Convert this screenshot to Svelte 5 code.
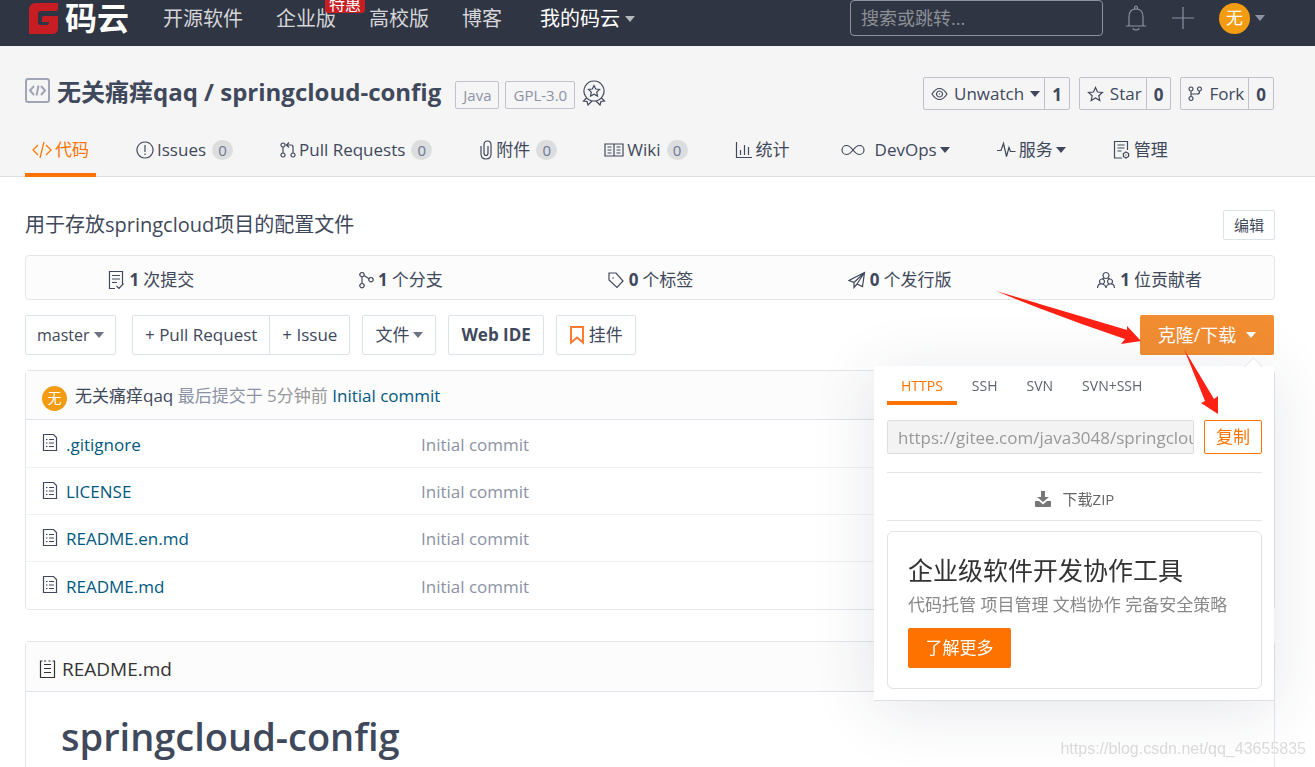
<script>
    const icons = {
        repo: { w: 25, h: 25, d: "M3 1h19q2 0 2 2v19q0 2-2 2H3q-2 0-2-2V3q0-2 2-2zM9 8l-4 4.500 4 4.500M16 8l4 4.500-4 4.500M13.500 7.500l-2 10" },
        code: { w: 20, h: 18, d: "M6 4L1 9l5 5M14 4l5 5-5 5M12 1L8 17" },
        issue: { w: 18, h: 18, d: "M9 1a8 8 0 1 0 .01 0zM9 4v7M9 12.500v1.500" },
        pull: { w: 16, h: 18, d: "M3 2a2 2 0 1 0 .01 0zM3 12a2 2 0 1 0 .01 0zM13 12a2 2 0 1 0 .01 0zM3 6v6M13 12V6q0-2-2-2H7M9 1.500L6.500 4 9 6.500" },
        clip: { w: 14, h: 20, d: "M2 6v8q0 5 5 5t5-5V5q0-4-3.500-4T5 5v8q0 2.500 2 2.500T9 13V6" },
        book: { w: 20, h: 16, d: "M1 2h18v12H1zM10 2v12M3.500 5h4M3.500 8h4M3.500 11h4M12.500 5h4M12.500 8h4M12.500 11h4" },
        chart: { w: 18, h: 18, d: "M1.500 1v15.500H17M5.500 14V9M9.500 14V4M13.500 14V6" },
        loop: { w: 35, h: 12, d: "M16 6C13 2 11.500 1.500 9.500 1.500a4.500 4.500 0 0 0 0 9C11.500 10.500 13 10 16 6c3-4 4.500-4.500 6.500-4.500a4.500 4.500 0 0 1 0 9C20.500 10.500 19 10 16 6z" },
        pulse: { w: 19, h: 18, d: "M0 9.500h4l2.500-7 3 13 2.500-9 1.500 4h5" },
        manage: { w: 18, h: 20, d: "M9 18H1.500V1.500h13V10M4.500 5h7M4.500 8h7M4.500 11h4M13 12l2.600 1.500v3L13 18l-2.600-1.500v-3zM13 14.500v1" },
        eye: { w: 17, h: 14, d: "M1 7q3.500-5.500 7.500-5.500T16 7q-3.500 5.500-7.500 5.500T1 7zM8.500 4a3 3 0 1 0 .01 0zM8.500 6.500v1" },
        star: { w: 17, h: 16, d: "M8.500 1.500l2 4.500 5 .5-3.700 3.300 1 4.700-4.300-2.500-4.300 2.500 1-4.700L1.500 6.500l5-.5z" },
        fork: { w: 15, h: 16, d: "M3 1a2 2 0 1 0 .01 0zM11.500 1a2 2 0 1 0 .01 0zM3 10.500a2 2 0 1 0 .01 0zM3 5v5.500M11.500 5v1q0 2-2.500 2H3" },
        medal: { w: 24, h: 26, d: "M12 1a10 10 0 1 0 .01 0zM12 5.500l1.700 3.500 3.800.5-2.800 2.600.8 3.900-3.500-1.900L8.500 16l.8-3.900-2.800-2.600 3.800-.5zM4.500 18L1.500 21l3.500.5 1 3.500 4-4M19.500 18l3 3-3.500.5-1 3.500-4-4" },
        commit: { w: 18, h: 20, d: "M8 18.500H2.500V1.500h13V14M5 5.500h8M5 9h8M5 12.500h5M9.500 16l2.500 2.500 4.500-5" },
        branch: { w: 16, h: 18, d: "M4 1.500a2.200 2.200 0 1 0 .01 0zM4 12.500a2.200 2.200 0 1 0 .01 0zM13 6.500a2.200 2.200 0 1 0 .01 0zM4 6v6.500M6 4.500l5 3.200" },
        tag: { w: 18, h: 18, d: "M2 2h7l7 8-6 6.500L2 9zM6 6.200v1.500" },
        plane: { w: 18, h: 18, d: "M16.500 1.500L1 9.500l5 2v5l3-3.500 5.500 2.500zM16.500 1.500L6 11.500M16.500 1.500L9 13" },
        people: { w: 20, h: 18, d: "M10 1.500a3 3 0 1 0 .01 0zM6 8a2.500 2.500 0 1 0 .01 0zM14 8a2.500 2.500 0 1 0 .01 0zM8 7l-2 1M12 7l2 1M1.500 17q.5-5 4.500-4t4 4q0-3 4-4t4.500 4" },
        doc: { w: 16, h: 19, d: "M1.500 1.500h10l3 3v13h-13zM4 6.500h1.500M7 6.500h5M4 10h1.500M7 10h5M4 13.500h1.500M7 13.500h5" },
        readme: { w: 17, h: 20, d: "M3.500 2H1.500v16.500h14V2h-2M5 2h2M9.500 2h2M5 5.500h7M5 9.500h7M5 13.500h7" },
        mark: { w: 16, h: 20, d: "M2 2h12v15.500l-6-5-6 5z" },
        bell: { w: 22, h: 27, d: "M1 21h20M4 21v-9q0-8 7-8t7 8v9M9.500 4q0-3 1.500-3t1.500 3M7.500 23.500q3.500 3 7 0" },
        plus: { w: 22, h: 22, d: "M11 0v22M0 11h22" },
    };

    const navLinks = ["开源软件", "企业版", "高校版", "博客"];

    const tabs = [
        { icon: "code", label: "代码", active: true },
        { icon: "issue", label: "Issues", count: 0 },
        { icon: "pull", label: "Pull Requests", count: 0 },
        { icon: "clip", label: "附件", count: 0 },
        { icon: "book", label: "Wiki", count: 0 },
        { icon: "chart", label: "统计" },
        { icon: "loop", label: "DevOps", menu: true },
        { icon: "pulse", label: "服务", menu: true },
        { icon: "manage", label: "管理" },
    ];

    const actions = [
        { icon: "eye", label: "Unwatch", count: 1, menu: true },
        { icon: "star", label: "Star", count: 0 },
        { icon: "fork", label: "Fork", count: 0 },
    ];

    const stats = [
        { icon: "commit", count: 1, label: "次提交" },
        { icon: "branch", count: 1, label: "个分支" },
        { icon: "tag", count: 0, label: "个标签" },
        { icon: "plane", count: 0, label: "个发行版" },
        { icon: "people", count: 1, label: "位贡献者" },
    ];

    const files = [".gitignore", "LICENSE", "README.en.md", "README.md"];
    const protocols = ["HTTPS", "SSH", "SVN", "SVN+SSH"];

    let protocol = $state("HTTPS");
    let cloneOpen = $state(true);
    let cloneUrl = $state("https://gitee.com/java3048/springcloud-config.git");

    function copyUrl() {
        navigator.clipboard?.writeText(cloneUrl);
    }
</script>

{#snippet icon(name)}
    <svg class="icon" width={icons[name].w} height={icons[name].h} viewBox="0 0 {icons[name].w} {icons[name].h}" aria-hidden="true">
        <path d={icons[name].d} />
    </svg>
{/snippet}

{#snippet caret()}
    <svg class="caret" width="10" height="6" viewBox="0 0 10 6" aria-hidden="true"><path d="M0 0h10L5 6z" /></svg>
{/snippet}

<div class="page">
    <nav class="navbar">
        <a class="logo" href="#home">
            <svg width="31" height="32" viewBox="0 0 31 32" aria-hidden="true">
                <path fill="#c71d23" d="M8 1h22v6q0 2-2 2H13q-3 0-3 3v9q0 2 2 2h7q2 0 2-2v-1h-7v-4q0-2 2-2h14v12q0 6-6 6H1V8q0-7 7-7z" />
            </svg>
            <span>码云</span>
        </a>
        <div class="nav-links">
            {#each navLinks as link}
                <a href="#nav">{link}{#if link === "企业版"}<span class="promo">特惠</span>{/if}</a>
            {/each}
            <a class="mine" href="#mine">我的码云{@render caret()}</a>
        </div>
        <input class="search" type="text" placeholder="搜索或跳转..." aria-label="搜索或跳转" />
        <div class="nav-tools">
            <button aria-label="通知">{@render icon("bell")}</button>
            <button aria-label="新建">{@render icon("plus")}</button>
            <button class="user"><span class="avatar">无</span>{@render caret()}</button>
        </div>
    </nav>

    <header class="repo-header">
        <div class="title-row">
            <span class="repo-icon">{@render icon("repo")}</span>
            <h1>无关痛痒qaq / springcloud-config</h1>
            <a class="label" href="#java">Java</a>
            <a class="label" href="#license">GPL-3.0</a>
            <span class="medal">{@render icon("medal")}</span>
            <div class="actions">
                {#each actions as action}
                    <div class="action">
                        <button>{@render icon(action.icon)}<span>{action.label}</span>{#if action.menu}{@render caret()}{/if}</button>
                        <a href="#count">{action.count}</a>
                    </div>
                {/each}
            </div>
        </div>
        <div class="tabs">
            {#each tabs as tab}
                <a class="tab" class:active={tab.active} href="#tab">
                    {@render icon(tab.icon)}
                    <span>{tab.label}</span>
                    {#if tab.count !== undefined}<span class="badge">{tab.count}</span>{/if}
                    {#if tab.menu}{@render caret()}{/if}
                </a>
            {/each}
        </div>
    </header>

    <main>
        <div class="description">
            <p>用于存放springcloud项目的配置文件</p>
            <button class="btn small">编辑</button>
        </div>

        <div class="stats">
            {#each stats as stat}
                <a href="#stat">{@render icon(stat.icon)}<b>{stat.count}</b><span>{stat.label}</span></a>
            {/each}
        </div>

        <div class="toolbar">
            <label class="btn branch">
                <select aria-label="分支">
                    <option>master</option>
                </select>
                {@render caret()}
            </label>
            <div class="group">
                <button>+ Pull Request</button>
                <button>+ Issue</button>
            </div>
            <button class="btn">文件{@render caret()}</button>
            <button class="btn strong">Web IDE</button>
            <button class="btn widget">{@render icon("mark")}挂件</button>

            <div class="clone">
                <button class="clone-btn" onclick={() => (cloneOpen = !cloneOpen)}>克隆/下载{@render caret()}</button>
                {#if cloneOpen}
                    <div class="popup">
                        <div class="protocols">
                            {#each protocols as name}
                                <button class:active={protocol === name} onclick={() => (protocol = name)}>{name}</button>
                            {/each}
                        </div>
                        <div class="url-row">
                            <input type="text" readonly value={cloneUrl} aria-label="仓库地址" />
                            <button onclick={copyUrl}>复制</button>
                        </div>
                        <a class="download" href="#zip">
                            <svg width="16" height="16" viewBox="0 0 16 16" aria-hidden="true">
                                <path d="M6 0h4v6h4L8 11 2 6h4zM0 10h4l4 3.500L12 10h4v5q0 1-1 1H1q-1 0-1-1z" />
                            </svg>
                            下载ZIP
                        </a>
                        <div class="promo-card">
                            <h3>企业级软件开发协作工具</h3>
                            <p>代码托管 项目管理 文档协作 完备安全策略</p>
                            <button>了解更多</button>
                        </div>
                    </div>
                {/if}
                <svg class="arrows" width="278" height="124" viewBox="997 291 278 124" aria-hidden="true">
                    <path d="M997 291l131 39v-4l14 15-20 3 4-5q-66-22-129-48z" />
                    <path d="M1185 349l30 50 4-3v18l-17-11 4-2z" />
                </svg>
            </div>
        </div>

        <section class="box">
            <div class="commit">
                <span class="avatar">无</span>
                <p><a class="author" href="#user">无关痛痒qaq</a> 最后提交于 <span class="time">5分钟前</span> <a href="#commit">Initial commit</a></p>
            </div>
            <table>
                <tbody>
                    {#each files as file}
                        <tr>
                            <td class="name"><a href="#file">{@render icon("doc")}<span>{file}</span></a></td>
                            <td class="message">Initial commit</td>
                        </tr>
                    {/each}
                </tbody>
            </table>
        </section>

        <section class="box readme">
            <div class="readme-head">{@render icon("readme")}<span>README.md</span></div>
            <h2>springcloud-config</h2>
        </section>
    </main>
    <div class="watermark">https://blog.csdn.net/qq_43655835</div>
</div>

<style>
    :global(body) {
        margin: 0;
        background: #fff;
    }

    .page {
        display: flex;
        flex-direction: column;
        min-height: 100vh;
        color: #40485b;
        font-family: "Open Sans", "Noto Sans CJK SC", sans-serif;
        font-size: 17px;
        line-height: 24px;
    }

    .page * {
        box-sizing: border-box;
    }

    h1, h2, h3, p {
        margin: 0;
    }

    a {
        color: inherit;
        text-decoration: none;
    }

    button, input, select {
        font: inherit;
        color: inherit;
    }

    button {
        display: inline-flex;
        align-items: center;
        justify-content: center;
        padding: 0;
        border: none;
        background: none;
        white-space: nowrap;
        cursor: pointer;
    }

    .icon {
        flex: none;
        fill: none;
        stroke: currentColor;
        stroke-width: 1.2;
    }

    .caret {
        flex: none;
        fill: currentColor;
    }

    .avatar {
        display: flex;
        flex: none;
        align-items: center;
        justify-content: center;
        border-radius: 50%;
        background: #f39c12;
        color: #fff;
    }

    /* top bar */
    .navbar {
        display: flex;
        align-items: center;
        height: 46px;
        padding: 0 50px 10px 28px;
        background: #2f3542;
        color: #d5d6d9;
        font-size: 20px;
    }

    .logo {
        display: flex;
        align-items: center;
        gap: 6px;
        margin-right: 34px;
        color: #fff;
        font-size: 32px;
        font-weight: bold;
        line-height: 36px;
    }

    .nav-links {
        display: flex;
        gap: 33px;
        padding-top: 2px;
        white-space: nowrap;
    }

    .nav-links a {
        position: relative;
    }

    .nav-links .mine {
        display: flex;
        align-items: center;
        gap: 5px;
        margin-left: 5px;
        color: #fff;
    }

    .mine .caret {
        color: #b6b8be;
    }

    .promo {
        position: absolute;
        right: -29px;
        top: -11px;
        padding: 0 4px;
        border-radius: 3px;
        background: #c71d23;
        color: #fff;
        font-size: 16px;
        line-height: 17px;
    }

    .search {
        width: 253px;
        height: 36px;
        margin-left: auto;
        padding: 0 10px;
        border: 1px solid #8c92a4;
        border-radius: 4px;
        background: transparent;
        font-size: 18px;
    }

    .search::placeholder {
        color: #8d9097;
        opacity: 1;
    }

    .nav-tools {
        display: flex;
        align-items: center;
        gap: 25px;
        margin-left: 22px;
        color: #8c92a4;
    }

    .user {
        gap: 5px;
    }

    .user .avatar {
        width: 31px;
        height: 31px;
        font-size: 17px;
    }

    /* repository header */
    .repo-header {
        padding: 28px 40px 0 25px;
        border-bottom: 1px solid #ddd;
        background: #f5f5f5;
    }

    .title-row {
        display: flex;
        align-items: center;
        height: 38px;
    }

    .repo-icon {
        display: flex;
        padding-bottom: 6px;
        color: #a0a5b5;
    }

    .repo-icon .icon {
        stroke-width: 2;
    }

    h1 {
        margin: 0 8px 2px 7px;
        font-size: 24px;
        line-height: 36px;
        white-space: nowrap;
    }

    .label {
        margin: 4px 0 0 6px;
        padding: 0 7px;
        border: 1px solid #c0c2cc;
        border-radius: 2px;
        color: #8c92a4;
        font-size: 15px;
        line-height: 26px;
    }

    .medal {
        display: flex;
        margin-left: 7px;
    }

    .actions {
        display: flex;
        gap: 9px;
        margin: 0 1px 0 auto;
    }

    .action {
        display: flex;
        height: 33px;
        border: 1px solid #bfc2cd;
        border-radius: 2px;
    }

    .action button {
        gap: 6px;
        padding: 2px 4px 0 7px;
    }

    .action a {
        padding: 0 7px;
        border-left: 1px solid #bfc2cd;
        font-weight: bold;
        line-height: 33px;
    }

    .tabs {
        display: flex;
        gap: 33px;
        height: 65px;
        margin-bottom: -1px;
    }

    .tab {
        display: flex;
        align-items: center;
        gap: 3px;
        height: 65px;
        padding: 14px 7px 0;
        border-bottom: 4px solid transparent;
        white-space: nowrap;
    }

    .tab.active {
        border-color: #fe7300;
        color: #fe7300;
    }

    .badge {
        width: 21px;
        margin-left: 3px;
        border-radius: 10px;
        background: #dcdddf;
        color: #6d7893;
        font-size: 15px;
        line-height: 20px;
        text-align: center;
    }

    /* main column */
    main {
        display: flex;
        flex: 1;
        flex-direction: column;
        padding: 33px 40px 0 25px;
    }

    .description {
        display: flex;
        align-items: center;
        justify-content: space-between;
        font-size: 20px;
    }

    .btn {
        display: inline-flex;
        align-items: center;
        gap: 4px;
        height: 40px;
        padding: 0 12px;
        border: 1px solid #dce3e8;
        border-radius: 2px;
        background: #fff;
    }

    .btn.small {
        height: 30px;
        padding: 0 10px;
        font-size: 15px;
    }

    .stats {
        display: grid;
        grid-template-columns: repeat(5, 1fr);
        height: 45px;
        margin-top: 15px;
        border: 1px solid #e3e6e8;
        border-radius: 4px;
        background: #fcfcfc;
    }

    .stats a {
        display: flex;
        align-items: center;
        justify-content: center;
        gap: 4px;
        padding-top: 4px;
    }

    .toolbar {
        display: flex;
        align-items: center;
        gap: 12px;
        margin-top: 15px;
    }

    .toolbar .caret {
        color: #6d7383;
    }

    .branch {
        margin-right: 4px;
        padding: 0 11px;
        font-size: 16px;
    }

    .branch select {
        padding: 0;
        border: none;
        background: none;
        appearance: none;
    }

    .group {
        display: flex;
        height: 40px;
        border: 1px solid #dce3e8;
        border-radius: 2px;
    }

    .group button {
        padding: 0 12px;
    }

    .group button + button {
        border-left: 1px solid #dce3e8;
    }

    .strong {
        font-weight: bold;
    }

    .widget .icon {
        color: #fe7a30;
        stroke-width: 2;
    }

    .clone {
        position: relative;
        margin: 0 1px 0 auto;
    }

    .clone-btn {
        gap: 10px;
        width: 134px;
        height: 40px;
        border-radius: 2px;
        background: #f28d32;
        color: #fff;
        font-size: 18px;
    }

    .clone-btn .caret {
        color: #fff;
    }

    .popup {
        position: absolute;
        z-index: 1;
        top: 51px;
        right: 0;
        width: 400px;
        padding: 0 12px 11px 13px;
        border-bottom: 1px solid #dcdee2;
        background: #fff;
        box-shadow: 0 8px 60px rgba(40, 50, 80, 0.12);
    }

    .popup::before {
        content: "";
        position: absolute;
        top: -6px;
        right: 14px;
        width: 12px;
        height: 12px;
        border: 1px solid #e3e6e8;
        border-width: 1px 0 0 1px;
        background: #fff;
        transform: rotate(45deg);
    }

    .protocols {
        display: flex;
        gap: 1px;
        font-size: 14px;
        color: #5f6470;
    }

    .protocols button {
        height: 39px;
        padding: 4px 14px 0;
        border-bottom: 4px solid transparent;
    }

    .protocols .active {
        border-color: #fe7300;
        color: #fe7300;
    }

    .url-row {
        display: flex;
        gap: 10px;
        margin-top: 15px;
    }

    .url-row input {
        flex: 1;
        min-width: 0;
        height: 34px;
        padding: 0 0 0 10px;
        border: 1px solid #dcdfe2;
        border-radius: 2px;
        background: #f3f3f3;
        color: #999;
    }

    .url-row button {
        width: 58px;
        border: 1px solid #fe7300;
        border-radius: 2px;
        color: #fe7300;
    }

    .download {
        display: flex;
        align-items: center;
        justify-content: center;
        gap: 12px;
        height: 49px;
        margin-top: 18px;
        padding-top: 4px;
        border: 1px solid #e3e5e7;
        border-width: 1px 0;
        color: #666;
        font-size: 15px;
    }

    .download svg {
        fill: #777;
    }

    .promo-card {
        margin-top: 10px;
        padding: 20px;
        border: 1px solid #e1e2e4;
        border-radius: 6px;
    }

    .promo-card h3 {
        color: #333;
        font-size: 25px;
        font-weight: normal;
        line-height: 36px;
    }

    .promo-card p {
        padding: 5px 0 11px;
        color: #888;
        white-space: nowrap;
    }

    .promo-card button {
        width: 103px;
        height: 40px;
        border-radius: 2px;
        background: #fe7300;
        color: #fff;
    }

    .arrows {
        position: absolute;
        z-index: 2;
        top: -24px;
        right: 0;
        fill: #ff2113;
        pointer-events: none;
    }

    .box {
        margin-top: 15px;
        border: 1px solid #e1e6eb;
        border-radius: 4px;
    }

    .commit {
        display: flex;
        align-items: center;
        gap: 8px;
        height: 49px;
        padding: 2px 16px 0;
        border-bottom: 1px solid #dce2e7;
        background: #fcfcfc;
        color: #8c92a4;
    }

    .commit .avatar {
        width: 25px;
        height: 25px;
        margin-top: 4px;
        font-size: 14px;
    }

    .commit a {
        color: #005980;
    }

    .commit .author {
        color: #40485b;
    }

    .commit .time {
        color: #999;
    }

    table {
        width: 100%;
        border-collapse: collapse;
    }

    td {
        height: 47px;
        padding: 3px 0 0;
        border-bottom: 1px solid #eff2f4;
    }

    tr:last-child td {
        height: 48px;
        border-bottom: none;
    }

    .name {
        width: 395px;
        padding-left: 16px;
    }

    .name a {
        display: flex;
        align-items: center;
        gap: 8px;
        color: #005980;
    }

    .name .icon {
        margin-bottom: 4px;
        color: #40485b;
    }

    .message {
        color: #8c92a4;
    }

    .readme {
        flex: 1;
        margin-top: 31px;
        border-bottom: none;
        border-radius: 4px 4px 0 0;
    }

    .readme-head {
        display: flex;
        align-items: center;
        gap: 6px;
        height: 50px;
        padding: 4px 13px 0;
        border-bottom: 1px solid #dce2e7;
        background: #fcfcfc;
        color: #333;
        font-size: 19px;
    }

    h2 {
        padding: 18px 35px 0;
        font-size: 38px;
        font-weight: 600;
        line-height: 52px;
    }

    .watermark {
        position: fixed;
        right: 9px;
        bottom: 6px;
        color: #dcdcdc;
        font-family: "Liberation Sans", sans-serif;
        font-size: 16px;
        text-shadow: 1px 1px 0 #fff;
    }
</style>
